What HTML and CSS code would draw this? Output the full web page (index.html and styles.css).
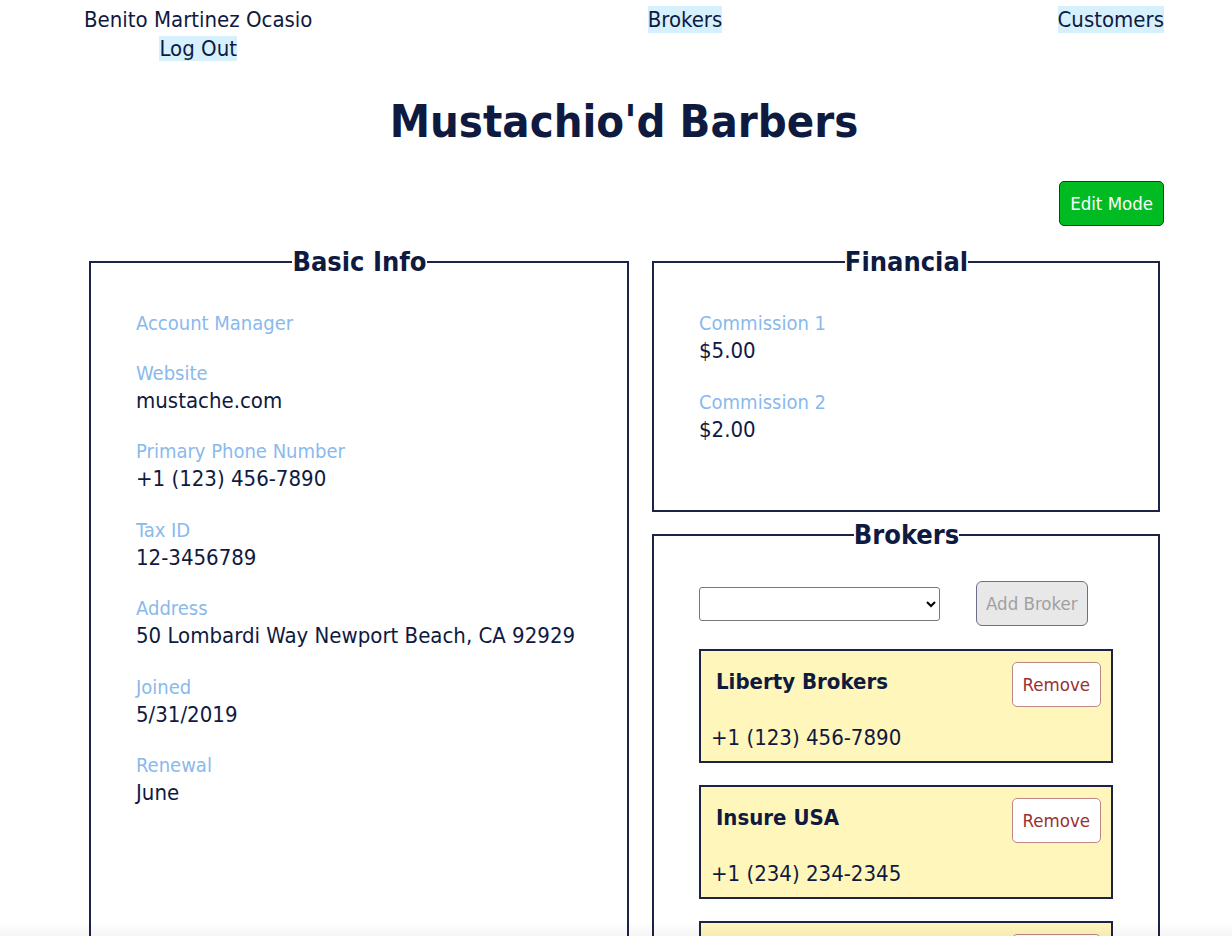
FILE: index.html
```html
<!DOCTYPE html>
<html lang="en">
<head>
<meta charset="utf-8">
<title>Mustachio'd Barbers</title>
<link rel="stylesheet" href="styles.css">
</head>
<body>
<header class="topbar">
  <div class="user">
    <span class="username">Benito Martinez Ocasio</span>
    <a class="nav-link" href="#">Log Out</a>
  </div>
  <a class="nav-link" href="#">Brokers</a>
  <a class="nav-link" href="#">Customers</a>
</header>

<main class="page">
  <h1 class="title">Mustachio'd Barbers</h1>
  <div class="actions">
    <button class="btn-edit" type="button">Edit Mode</button>
  </div>

  <div class="columns">
    <fieldset class="panel panel-basic">
      <legend>Basic Info</legend>
      <div class="field"><div class="label">Account Manager</div><div class="value"></div></div>
      <div class="field"><div class="label">Website</div><div class="value">mustache.com</div></div>
      <div class="field"><div class="label">Primary Phone Number</div><div class="value">+1 (123) 456-7890</div></div>
      <div class="field"><div class="label">Tax ID</div><div class="value">12-3456789</div></div>
      <div class="field"><div class="label">Address</div><div class="value">50 Lombardi Way Newport Beach, CA 92929</div></div>
      <div class="field"><div class="label">Joined</div><div class="value">5/31/2019</div></div>
      <div class="field"><div class="label">Renewal</div><div class="value">June</div></div>
    </fieldset>

    <div class="side">
      <fieldset class="panel panel-financial">
        <legend>Financial</legend>
        <div class="field"><div class="label">Commission 1</div><div class="value">$5.00</div></div>
        <div class="field"><div class="label">Commission 2</div><div class="value">$2.00</div></div>
      </fieldset>

      <fieldset class="panel panel-brokers">
        <legend>Brokers</legend>
        <div class="add-row">
          <select class="broker-select"><option></option></select>
          <button class="btn-add" type="button" disabled>Add Broker</button>
        </div>
        <div class="broker-card">
          <div class="broker-head">
            <h3 class="broker-name">Liberty Brokers</h3>
            <button class="btn-remove" type="button">Remove</button>
          </div>
          <div class="broker-phone">+1 (123) 456-7890</div>
        </div>
        <div class="broker-card">
          <div class="broker-head">
            <h3 class="broker-name">Insure USA</h3>
            <button class="btn-remove" type="button">Remove</button>
          </div>
          <div class="broker-phone">+1 (234) 234-2345</div>
        </div>
        <div class="broker-card">
          <div class="broker-head">
            <h3 class="broker-name">Shield Partners</h3>
            <button class="btn-remove" type="button">Remove</button>
          </div>
          <div class="broker-phone">+1 (345) 345-3456</div>
        </div>
      </fieldset>
    </div>
  </div>
</main>
<div class="bottom-fade"></div>
</body>
</html>
```

FILE: styles.css
```css
html, body {
  margin: 0;
  padding: 0;
  background: #ffffff;
}
body {
  font-family: "DejaVu Sans Condensed", "DejaVu Sans", sans-serif;
  font-stretch: condensed;
  color: #0f1a40;
}

.topbar {
  display: flex;
  justify-content: space-between;
  align-items: flex-start;
  padding: 6px 68px 0 84px;
  font-size: 22px;
}
.user {
  display: flex;
  flex-direction: column;
  align-items: center;
}
.username {
  line-height: 28px;
  margin-top: 0;
}
.nav-link {
  display: inline-block;
  color: #0f1a40;
  text-decoration: none;
  background: #d6f1fd;
  line-height: 27px;
}
.user .nav-link {
  line-height: 25px;
  margin-top: 2px;
}

.page {
  padding: 0 68px 0 84px;
}
.title {
  text-align: center;
  font-size: 45px;
  font-weight: bold;
  margin: 33px 0 0 0;
  line-height: 56px;
}
.actions {
  display: flex;
  justify-content: flex-end;
  margin-top: 31px;
}
.btn-edit {
  font-family: inherit;
  font-stretch: condensed;
  font-size: 18.5px;
  color: #ffffff;
  background: #00bb22;
  border: 1px solid #1f3a2a;
  border-radius: 5px;
  height: 45px;
  padding: 0 10px;
}

.columns {
  display: grid;
  grid-template-columns: 540px 508px;
  column-gap: 23px;
  margin-top: 21px;
  padding-left: 5px;
}
.side {
  display: flex;
  flex-direction: column;
  gap: 8px;
}

.panel {
  border: 2px solid #1c2346;
  margin: 0;
  min-width: 0;
  padding: 34px 44px 20px 45px;
}
.panel legend {
  margin: 0 auto;
  padding: 0;
  font-size: 27px;
  font-weight: bold;
  line-height: 30px;
}
.panel-basic {
  min-height: 720px;
}
.panel-financial {
  height: 265px;
  box-sizing: border-box;
}
.panel-brokers {
  padding-top: 31px;
}

.field {
  margin-bottom: 23.5px;
}
.label {
  color: #8ab9ec;
  font-size: 20px;
  line-height: 25px;
}
.value {
  font-size: 22px;
  line-height: 30px;
}
.value:empty {
  height: 1px;
}

.add-row {
  display: flex;
  align-items: center;
  gap: 36px;
  margin-bottom: 23px;
}
.broker-select {
  width: 241px;
  height: 34px;
  border: 1px solid #777777;
  border-radius: 3px;
  background: #ffffff;
  font-family: inherit;
  font-size: 16px;
}
.btn-add {
  font-family: inherit;
  font-stretch: condensed;
  font-size: 18.5px;
  color: #a0a0a0;
  background: #e8e8e8;
  border: 1px solid #6b7088;
  border-radius: 6px;
  height: 45px;
  padding: 0 9px;
}

.broker-card {
  width: 414px;
  box-sizing: border-box;
  background: #fff6bc;
  border: 2px solid #1c2346;
  padding: 11px 10px 8px 10px;
  margin-bottom: 22px;
}
.broker-head {
  display: flex;
  justify-content: space-between;
  align-items: flex-start;
}
.broker-name {
  margin: 6px 0 0 5px;
  font-size: 22px;
  line-height: 28px;
  font-weight: bold;
}
.btn-remove {
  font-family: inherit;
  font-stretch: condensed;
  font-size: 18.5px;
  color: #9a3030;
  background: #ffffff;
  border: 1px solid #c08585;
  border-radius: 5px;
  height: 45px;
  padding: 0 10px;
}
.broker-phone {
  font-size: 22px;
  line-height: 30px;
  margin-top: 16px;
}

.bottom-fade {
  position: fixed;
  left: 0;
  right: 0;
  bottom: 0;
  height: 14px;
  background: linear-gradient(to bottom, rgba(0,0,0,0), rgba(0,0,0,0.04));
  pointer-events: none;
}
```
